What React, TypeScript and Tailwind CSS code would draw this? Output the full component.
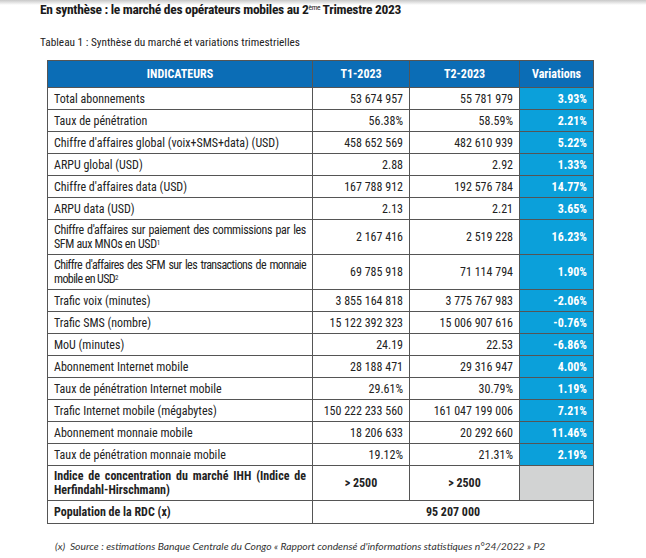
import React from "react";

type Row = {
  label: React.ReactNode;
  t1: string;
  t2: string;
  v: string;
  squeeze?: string;
};

const rows: Row[] = [
  { label: "Total abonnements", t1: "53 674 957", t2: "55 781 979", v: "3.93%" },
  { label: "Taux de pénétration", t1: "56.38%", t2: "58.59%", v: "2.21%" },
  { label: "Chiffre d'affaires global (voix+SMS+data) (USD)", t1: "458 652 569", t2: "482 610 939", v: "5.22%" },
  { label: "ARPU global (USD)", t1: "2.88", t2: "2.92", v: "1.33%" },
  { label: "Chiffre d'affaires data (USD)", t1: "167 788 912", t2: "192 576 784", v: "14.77%" },
  { label: "ARPU data (USD)", t1: "2.13", t2: "2.21", v: "3.65%" },
  {
    label: (
      <>
        Chiffre d'affaires sur paiement des commissions par les SFM aux MNOs en USD
        <sup className="text-[7px] leading-none">1</sup>
      </>
    ),
    t1: "2 167 416",
    t2: "2 519 228",
    v: "16.23%",
    squeeze: "tracking-[-0.35px]",
  },
  {
    label: (
      <>
        Chiffre d'affaires des SFM sur les transactions de monnaie mobile en USD
        <sup className="text-[7px] leading-none">2</sup>
      </>
    ),
    t1: "69 785 918",
    t2: "71 114 794",
    v: "1.90%",
    squeeze: "tracking-[-0.6px]",
  },
  { label: "Trafic voix (minutes)", t1: "3 855 164 818", t2: "3 775 767 983", v: "-2.06%" },
  { label: "Trafic SMS (nombre)", t1: "15 122 392 323", t2: "15 006 907 616", v: "-0.76%" },
  { label: "MoU (minutes)", t1: "24.19", t2: "22.53", v: "-6.86%" },
  { label: "Abonnement Internet mobile", t1: "28 188 471", t2: "29 316 947", v: "4.00%" },
  { label: "Taux de pénétration Internet mobile", t1: "29.61%", t2: "30.79%", v: "1.19%" },
  { label: "Trafic Internet mobile (mégabytes)", t1: "150 222 233 560", t2: "161 047 199 006", v: "7.21%" },
  { label: "Abonnement monnaie mobile", t1: "18 206 633", t2: "20 292 660", v: "11.46%" },
  { label: "Taux de pénétration monnaie mobile", t1: "19.12%", t2: "21.31%", v: "2.19%" },
];

const cell = "border border-[#555] px-[6px] whitespace-nowrap";
// the two long labels are squeezed a bit so the line breaks fall where the print has them
const wrapCell = "border border-[#555] px-[6px] text-justify ";

export default function App() {
  return (
    <div
      className="w-[646px] h-[558px] bg-white text-[#222] overflow-hidden bg-[linear-gradient(to_bottom,#c8c8c8_0px,#ffffff_5px)]"
      style={{ fontFamily: '"Roboto Condensed", "Liberation Sans", sans-serif' }}
    >
      <h1 className="pl-[40px] pt-[1px] text-[13.5px] font-bold leading-[16px] tracking-[-0.3px] text-[#1a1a1a]">
        En synthèse : le marché des opérateurs mobiles au 2
        <sup className="text-[7.5px] font-normal">ème</sup> Trimestre 2023
      </h1>
      <h2 className="pl-[40px] mt-[18px] text-[11.3px] leading-[16px] text-[#222]">
        Tableau 1 : Synthèse du marché et variations trimestrielles
      </h2>

      <table className="ml-[47px] mt-[9px] w-[546px] border-collapse text-[12px] leading-[14px] table-fixed">
        <colgroup>
          <col className="w-[265px]" />
          <col className="w-[97px]" />
          <col className="w-[110px]" />
          <col className="w-[74px]" />
        </colgroup>
        <thead>
          <tr className="h-[27px] bg-[#0b6db6] text-white font-bold">
            <th className={cell + " text-center"}>INDICATEURS</th>
            <th className={cell + " text-center"}>T1-2023</th>
            <th className={cell + " text-center"}>T2-2023</th>
            <th className={cell + " text-center"}>Variations</th>
          </tr>
        </thead>
        <tbody>
          {rows.map((r, i) => (
            <tr key={i} className={r.squeeze ? "h-[35px]" : "h-[22px]"}>
              <td className={r.squeeze ? wrapCell + r.squeeze : cell + " text-left"}>{r.label}</td>
              <td className={cell + " text-right"}>{r.t1}</td>
              <td className={cell + " text-right"}>{r.t2}</td>
              <td className={cell + " text-right bg-[#0ba0da] text-white font-bold"}>{r.v}</td>
            </tr>
          ))}
          <tr className="h-[35px] font-bold">
            <td className="border border-[#555] px-[6px] text-justify">
              Indice de concentration du marché IHH (Indice de Herfindahl-Hirschmann)
            </td>
            <td className={cell + " text-center"}>&gt; 2500</td>
            <td className={cell + " text-center"}>&gt; 2500</td>
            <td className={cell + " bg-[#d2d3d3]"}></td>
          </tr>
          <tr className="h-[23px] font-bold">
            <td className={cell}>Population de la RDC (x)</td>
            <td className={cell + " text-center"} colSpan={3}>
              95 207 000
            </td>
          </tr>
        </tbody>
      </table>

      <p
        className="pl-[55px] mt-[15px] text-[10.3px] italic text-[#333]"
        style={{ fontFamily: "Lato, sans-serif" }}
      >
        (x)&nbsp; Source : estimations Banque Centrale du Congo « Rapport condensé d'informations statistiques n°24/2022 » P2
      </p>
    </div>
  );
}
